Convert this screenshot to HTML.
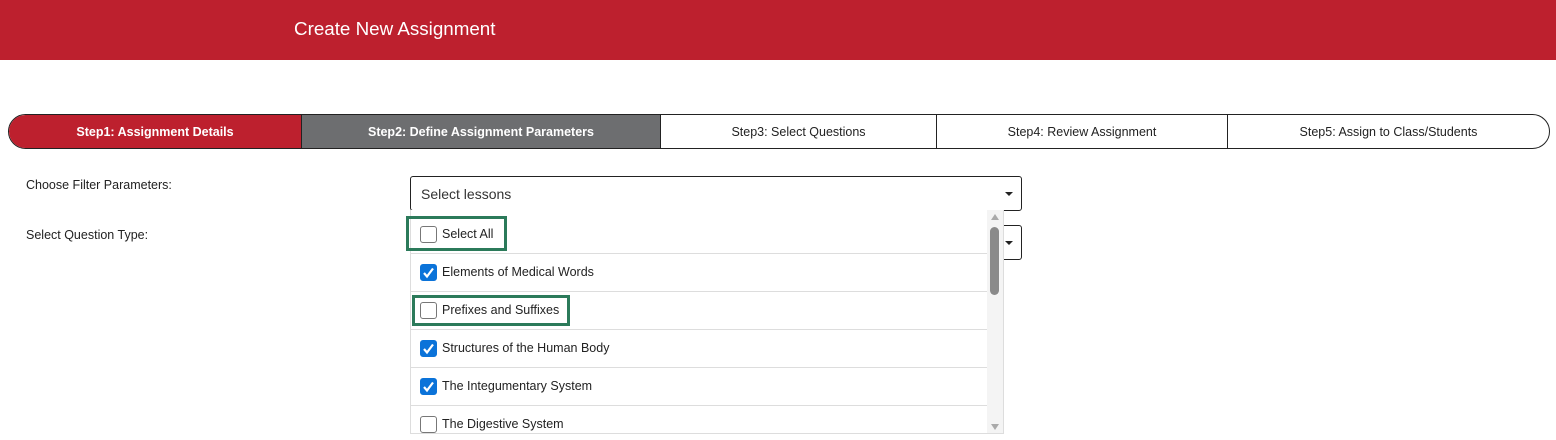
<!DOCTYPE html>
<html><head><style>
*{margin:0;padding:0;box-sizing:border-box}
body{width:1556px;height:440px;overflow:hidden;background:#fff;font-family:"Liberation Sans",sans-serif;color:#222;position:relative}
.hdr{position:absolute;left:0;top:0;width:1556px;height:60px;background:#bd202e}
.hdr span{position:absolute;left:294px;top:18px;color:#fff;font-size:18.8px}
.steps{position:absolute;left:8px;top:114px;width:1542px;height:35px;border:1px solid #222;border-radius:18px;overflow:hidden;display:flex}
.steps div{height:100%;display:flex;align-items:center;justify-content:center;font-size:12.5px;border-right:1px solid #222}
.s1{width:293px;background:#bd202e;color:#fff;font-weight:bold}
.s2{width:359px;background:#6d6e70;color:#fff;font-weight:bold}
.s3{width:276px}.s4{width:291px}.s5{flex:1;border-right:none!important}
.lbl{position:absolute;left:26px;font-size:12.5px}
.sel{position:absolute;left:410px;width:612px;height:35px;border:1px solid #222;border-radius:3px;background:#fff}
.arr{position:absolute;right:8px;top:15px;width:0;height:0;border-left:4px solid transparent;border-right:4px solid transparent;border-top:4px solid #222}
.list{position:absolute;left:410px;top:210px;width:594px;height:224px;background:#fff;border:1px solid #ddd;border-top:none;overflow:hidden}
.row{position:absolute;left:0;width:578px;height:38px;border-bottom:1px solid #ddd}
.cb{position:absolute;left:9px;top:10px;width:17px;height:17px;border:1px solid #777;border-radius:3px;background:#fff}
.cb.on{background:#0b73d9;border-color:#0b73d9}
.row span{position:absolute;left:31px;top:11px;font-size:12.5px}
.sb{position:absolute;right:0;top:0;width:16px;height:224px;background:#f4f4f4}
.thumb{position:absolute;left:3px;top:17px;width:9px;height:68px;background:#8a8a8a;border-radius:5px}
.g{position:absolute;border:3px solid #2b7a5a}
</style></head><body>
<div class="hdr"><span>Create New Assignment</span></div>
<div class="steps"><div class="s1">Step1: Assignment Details</div><div class="s2">Step2: Define Assignment Parameters</div><div class="s3">Step3: Select Questions</div><div class="s4">Step4: Review Assignment</div><div class="s5">Step5: Assign to Class/Students</div></div>
<div class="lbl" style="top:178px">Choose Filter Parameters:</div>
<div class="lbl" style="top:228px">Select Question Type:</div>
<div class="sel" style="top:225px"><div class="arr"></div></div>
<div class="sel" style="top:176px"><span style="position:absolute;left:10px;top:9px;font-size:14px;color:#333">Select lessons</span><div class="arr"></div></div>
<div class="list">
<div class="row" style="top:6px"><div class="cb"></div><span>Select All</span></div>
<div class="row" style="top:44px"><div class="cb on"><svg width="17" height="17" viewBox="0 0 17 17" style="position:absolute;left:-1px;top:-1px"><path d="M4 9l3 3.5L13 4.5" stroke="#fff" stroke-width="2.2" fill="none"/></svg></div><span>Elements of Medical Words</span></div>
<div class="row" style="top:82px"><div class="cb"></div><span>Prefixes and Suffixes</span></div>
<div class="row" style="top:120px"><div class="cb on"><svg width="17" height="17" viewBox="0 0 17 17" style="position:absolute;left:-1px;top:-1px"><path d="M4 9l3 3.5L13 4.5" stroke="#fff" stroke-width="2.2" fill="none"/></svg></div><span>Structures of the Human Body</span></div>
<div class="row" style="top:158px"><div class="cb on"><svg width="17" height="17" viewBox="0 0 17 17" style="position:absolute;left:-1px;top:-1px"><path d="M4 9l3 3.5L13 4.5" stroke="#fff" stroke-width="2.2" fill="none"/></svg></div><span>The Integumentary System</span></div>
<div class="row" style="top:196px;border:none"><div class="cb"></div><span>The Digestive System</span></div>
<div class="sb"><div style="position:absolute;left:4px;top:4px;border-left:4px solid transparent;border-right:4px solid transparent;border-bottom:6px solid #aaa"></div><div class="thumb"></div><div style="position:absolute;left:4px;bottom:4px;border-left:4px solid transparent;border-right:4px solid transparent;border-top:6px solid #aaa"></div></div>
</div>
<div class="g" style="left:406px;top:216px;width:101px;height:35px"></div>
<div class="g" style="left:412px;top:295px;width:158px;height:31px"></div>
</body></html>
